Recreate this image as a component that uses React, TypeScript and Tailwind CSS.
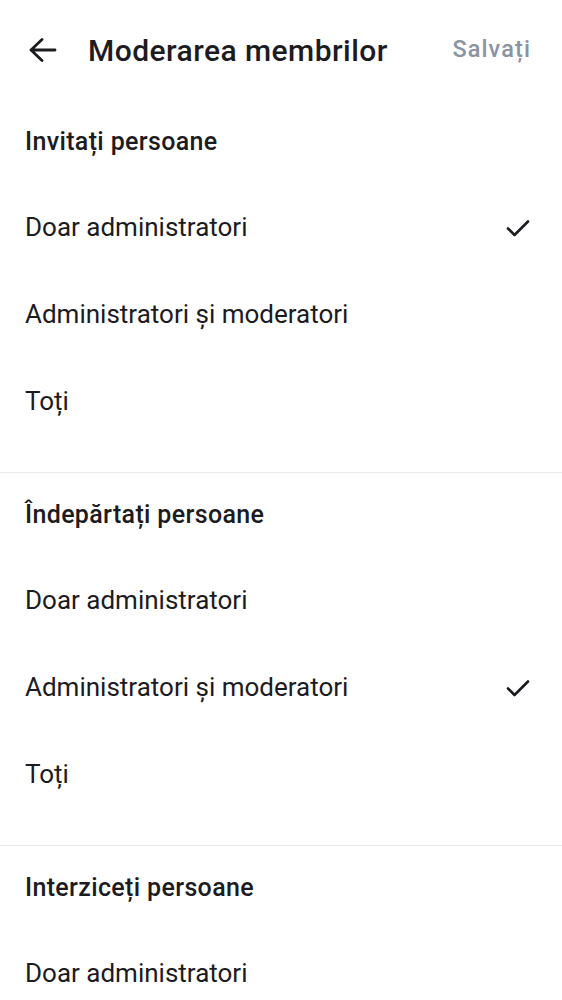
import React from "react";

function Check() {
  return (
    <svg width="28" height="28" viewBox="0 0 28 28" fill="none">
      <path d="M4 14.5 L10.5 21 L24 7.5" stroke="#1c1b1f" strokeWidth="2.6" strokeLinecap="round" strokeLinejoin="round" />
    </svg>
  );
}

function Item({ label, checked }: { label: string; checked?: boolean }) {
  return (
    <div className="h-[87px] flex items-center justify-between pl-[25px] pr-[30px]">
      <span className="text-[26px] text-[#1c1b1f]">{label}</span>
      {checked && <Check />}
    </div>
  );
}

function Section({
  title,
  checkedIndex,
  last,
  count = 3,
}: {
  title: string;
  checkedIndex: number;
  last?: boolean;
  count?: number;
}) {
  const items = ["Doar administratori", "Administratori și moderatori", "Toți"].slice(0, count);
  return (
    <div className={last ? "" : "border-b border-[#e8e9ec] pb-[27px]"}>
      <div className="h-[84px] flex items-center pl-[25px]">
        <span className="text-[25px] tracking-[0.35px] font-medium text-[#1c1b1f]">{title}</span>
      </div>
      {items.map((it, i) => (
        <Item key={i} label={it} checked={i === checkedIndex} />
      ))}
    </div>
  );
}

export default function App() {
  return (
    <div className="w-[562px] h-[1000px] overflow-hidden bg-white" style={{ fontFamily: "Roboto, sans-serif" }}>
      <div className="h-[100px] flex items-center pl-[29px] pr-[31px]">
        <svg width="28" height="24" viewBox="0 0 28 24" fill="none">
          <path d="M2 12 H26 M13 1.5 L2 12 L13 22.5" stroke="#1c1b1f" strokeWidth="2.8" strokeLinecap="round" strokeLinejoin="round" />
        </svg>
        <span className="ml-[31px] text-[30px] tracking-[0.45px] font-medium text-[#1c1b1f] flex-1">Moderarea membrilor</span>
        <span className="text-[23.5px] tracking-[1.1px] font-medium text-[#8b93a1]">Salvați</span>
      </div>
      <Section title="Invitați persoane" checkedIndex={0} />
      <Section title="Îndepărtați persoane" checkedIndex={1} />
      <Section title="Interziceți persoane" checkedIndex={-1} last count={1} />
    </div>
  );
}
